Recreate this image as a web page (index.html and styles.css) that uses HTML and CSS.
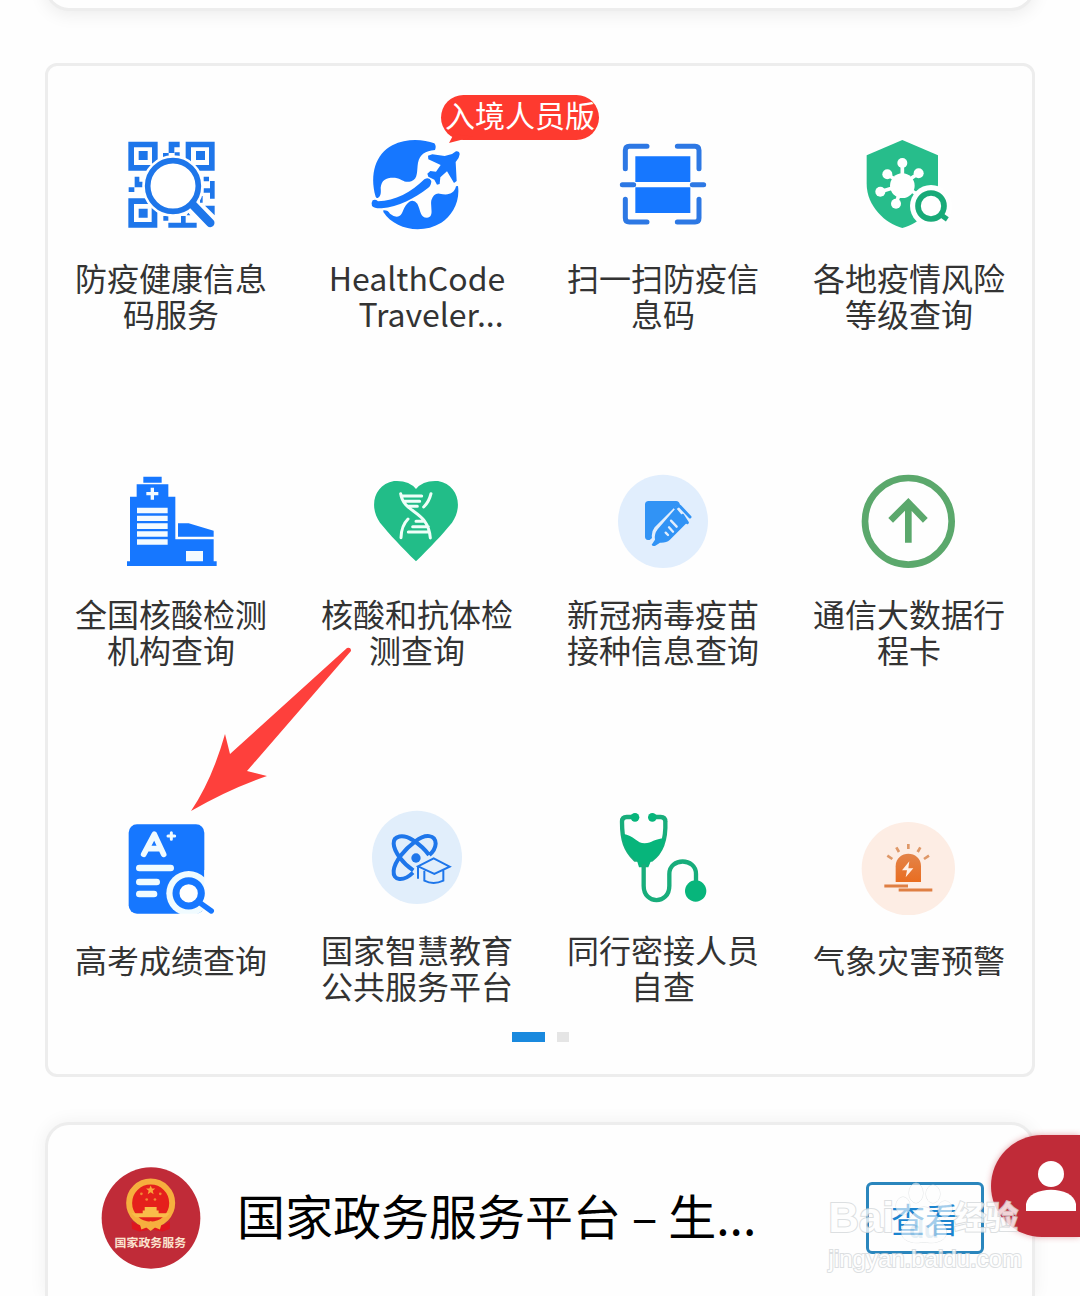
FILE: index.html
```html
<!DOCTYPE html>
<html lang="zh-CN">
<head>
    <meta charset="UTF-8">
    <meta name="viewport" content="width=device-width, initial-scale=1.0">
    <title>国家政务服务平台</title>
    <link rel="stylesheet" href="styles.css">
</head>
<body>
    <div class="page">
        <div class="card card-top"></div>

        <div class="card services">
            <a class="service" href="#">
                <span class="icon">
                    <svg viewBox="69 168 288 288" fill="#1e76ea">
                        <path fill-rule="evenodd" d="M85 182h88v87H85zM102 199v53h54v-53z"/>
                        <path fill-rule="evenodd" d="M257 182h87v87h-87zM273 199v53h54v-53z"/>
                        <path fill-rule="evenodd" d="M85 352h87v88H85zM102 369v54h53v-54z"/>
                        <path d="M116 210h27v27h-27zM288 210h27v27h-27zM116 383h27v27h-27z"/>
                        <path d="M206 182h33v17h-16v17h-17zM189 216h17v12h-17zM224 214h15v14h-15zM104 287h14v15h10v17h-24zM86 319h17v14H86zM311 287h16v14h-16zM330 300h14v53h-14v-18h-19v-13h19zM300 345h8v20h-8zM315 374h29v29zM190 405h15v14h-15zM243 405h14v20h33v15h-85v-15h38zM260 403l5-8 6 8z"/>
                        <circle cx="219" cy="315" r="76" fill="#fff" stroke="#fff" stroke-width="32"/>
                        <path d="M279 372l54 56" stroke="#fff" stroke-width="38"/>
                        <circle cx="219" cy="315" r="76" fill="#fff" stroke="#1e76ea" stroke-width="17"/>
                        <path d="M279 372l52 54" stroke="#1e76ea" stroke-width="25" stroke-linecap="round"/>
                    </svg>
                </span>
                <span class="label">防疫健康信息码服务</span>
            </a>
            <a class="service" href="#">
                <span class="icon">
                    <svg viewBox="87 168 288 288" fill="#1677ff">
                        <path d="M107 347C88 280 107 219 157 193C200 171 250 175 283 187Q290 195 285 207C255 210 240 220 234 245C230 270 235 292 214 301C190 307 188 293 165 290C138 289 125 296 122 320C123 332 124 345 113 351Q109 352 107 347Z"/>
                        <path d="M98 358Q106 354 114 361C165 360 215 333 253 295Q268 287 274 300Q274 314 264 321C225 352 175 377 125 382Q103 383 96 375Q93 365 98 358Z"/>
                        <path d="M264 224L277 220 314 225 336 219 348 211Q359 210 359 220Q358 232 347 243L350 300 342 306 321 271 301 289 299 309 291 311 283 296 265 287 262 278 271 270 288 272 302 252 265 235Z"/>
                        <path d="M130 388Q144 387 150 398Q166 411 178 405C191 397 188 377 208 362Q222 355 232 368C243 390 240 410 261 410C284 408 270 378 274 358Q281 335 299 338C326 344 343 338 348 316L354 315C361 363 335 405 304 425C247 460 165 447 130 393Z"/>
                    </svg>
                    <span class="badge">入境人员版</span>
                </span>
                <span class="label">HealthCode <span class="clipped">Traveler...</span></span>
            </a>
            <a class="service" href="#">
                <span class="icon">
                    <svg viewBox="45 48 288 288" fill="none" stroke="#2d78e4" stroke-width="15" stroke-linecap="round">
                        <path d="M76 143V88q0-12 12-12h53M232 76h53q12 0 12 12v55M76 235v56q0 12 12 12h53M232 303h53q12 0 12-12v-56M67 191h34M277 191h34"/>
                        <path d="M106 106h165v77H106zM106 199h165v77H106z" fill="#1677ff" stroke="none"/>
                    </svg>
                </span>
                <span class="label">扫一扫防疫信息码</span>
            </a>
            <a class="service" href="#">
                <span class="icon">
                    <svg viewBox="783 48 288 288">
                        <path d="M907 57l107 46v85c0 65-55 120-107 133c-50-13-107-65-107-133v-85z" fill="#27bd8b"/>
                        <g stroke="#fff" stroke-width="11" fill="#fff">
                            <path d="M907 126v62M862 160l45 30M956 157l-49 33M841 212l66-20M888 248l19-55M907 192l48 30"/>
                            <g stroke="none">
                                <circle cx="907" cy="194" r="37"/>
                                <circle cx="907" cy="126" r="15"/>
                                <circle cx="862" cy="160" r="15"/>
                                <circle cx="956" cy="157" r="15"/>
                                <circle cx="841" cy="212" r="15"/>
                                <circle cx="888" cy="248" r="15"/>
                                <circle cx="993" cy="255" r="63"/>
                            </g>
                        </g>
                        <circle cx="993" cy="255" r="39" fill="none" stroke="#19aa78" stroke-width="17"/>
                        <path d="M1022 281l20 14" stroke="#19aa78" stroke-width="15"/>
                    </svg>
                </span>
                <span class="label">各地疫情风险等级查询</span>
            </a>

            <a class="service" href="#">
                <span class="icon">
                    <svg viewBox="69 36 288 288" fill="#1677ff">
                        <path d="M130 47h55v18h-55zM110 70h95v37h21v128h115v66h9v14H81v-14h9V107h20zM234 187h32l75 22v18H234z"/>
                        <path d="M152 80h10v13h13v10h-13v13h-10v-13h-13V93h13zM111 140h92v17h-92zM111 164h92v16h-92zM111 187h92v17h-92zM111 211h92v16h-92zM111 235h92v16h-92zM258 270h51v31h-51z" fill="#f4fbff"/>
                    </svg>
                </span>
                <span class="label">全国核酸检测机构查询</span>
            </a>
            <a class="service" href="#">
                <span class="icon">
                    <svg viewBox="807 36 288 288">
                        <path d="M948 301C905 258 870 222 840 185C805 135 823 70 882 60Q927 57 948 84Q969 57 1014 60C1073 70 1091 135 1056 185C1026 222 991 258 948 301Z" fill="#22bd88"/>
                        <g fill="none" stroke="#effff9" stroke-width="9" stroke-linecap="round">
                            <path d="M902 98C912 160 984 145 991 231M993 98q-6 25-22 40M903 230q1-36 21-56M908 105h57M914 121h45M922 136h30M948 181h26M938 197h47M925 213h62"/>
                        </g>
                    </svg>
                </span>
                <span class="label">核酸和抗体检测查询</span>
            </a>
            <a class="service" href="#">
                <span class="icon">
                    <svg viewBox="45 36 288 288">
                        <ellipse cx="189" cy="181" rx="135" ry="140" fill="#e1eefd"/>
                        <path d="M146 120h82q10 0 12 12l-13 4-63 63q-11 14-8 32l-7 6h-5q-9-1-9-10V131q0-11 11-11z" fill="#3193f5"/>
                        <path d="M228 141l35 42-54 54q-10 9-29 8l-14 9q-8 3-11-3l10-15q-3-17 8-31z" fill="#3193f5"/>
                        <path d="M239 135l31 33M226 141l8-5M248 163l14 22" stroke="#3193f5" stroke-width="9" stroke-linecap="round"/>
                        <path d="M197 215l7 7M207 199l12 13M213 179l17 18" stroke="#e1eefd" stroke-width="7" stroke-linecap="round"/>
                    </svg>
                </span>
                <span class="label">新冠病毒疫苗接种信息查询</span>
            </a>
            <a class="service" href="#">
                <span class="icon">
                    <svg viewBox="783 36 288 288" fill="none" stroke="#5ba86c" stroke-width="20">
                        <circle cx="925" cy="181" r="130"/>
                        <path d="M925 245V128M872 178l53-53 51 53"/>
                    </svg>
                </span>
                <span class="label">通信大数据行程卡</span>
            </a>

            <a class="service" href="#">
                <span class="icon">
                    <svg viewBox="69 537 288 288">
                        <rect x="86" y="553" width="227" height="268" rx="25" fill="#1677ff"/>
                        <g fill="none" stroke="#f0fbff" stroke-linecap="round" stroke-linejoin="round">
                            <path d="M131 643l32-60 28 60M145 626h36" stroke-width="17"/>
                            <path d="M214 578v20M204 588h20" stroke-width="9"/>
                            <path d="M118 684h94M118 726h52M118 762h44" stroke-width="20"/>
                        </g>
                        <circle cx="266" cy="760" r="67" fill="#f0fbff"/>
                        <path d="M313 690h40v131h-40zM235 821h80v15h-80z" fill="#fefefe"/>
                        <circle cx="266" cy="760" r="38" fill="#fff" stroke="#1677ff" stroke-width="21"/>
                        <path d="M298 787l36 26" stroke="#1677ff" stroke-width="16" stroke-linecap="round"/>
                    </svg>
                </span>
                <span class="label">高考成绩查询</span>
            </a>
            <a class="service" href="#">
                <span class="icon">
                    <svg viewBox="87 54 288 288" fill="none" stroke="#1e76ea">
                        <ellipse cx="231" cy="199" rx="135" ry="140" fill="#e1eefb" stroke="none"/>
                        <path d="M219 245C190 273 158 270 161 239C164 210 195 174 226 151C257 127 286 131 287 158Q286 177 268 192M220 238C190 219 162 183 161 158C160 134 189 128 218 147Q249 167 267 192" stroke-width="12"/>
                        <circle cx="228" cy="201" r="14" fill="#1e76ea" stroke="none"/>
                        <path d="M234 226l47-24 48 25-46 22zM253 239v30q27 14 57 0v-31M234 226v37" fill="#e1eefb" stroke-width="6"/>
                    </svg>
                </span>
                <span class="label">国家智慧教育公共服务平台</span>
            </a>
            <a class="service" href="#">
                <span class="icon">
                    <svg viewBox="75 54 288 288" fill="#07b57b" stroke="#18ad7b" stroke-width="13">
                        <path d="M130 78h-20q-14 0-14 14c0 55 10 85 40 114h48c31-22 44-64 42-114q0-14-14-14h-22" fill="none"/>
                        <path d="M99 128c33 5 42 29 65 29s27-14 61-15c-4 32-19 55-42 67l-8 20h-28l-6-20c-27-16-41-42-42-81z" stroke="none"/>
                        <path d="M161 220v64c0 58 77 58 77 0v-35c0-50 80-50 80 0v25" fill="none"/>
                        <g stroke="none">
                            <circle cx="135" cy="79" r="13"/>
                            <circle cx="187" cy="79" r="13"/>
                            <circle cx="317" cy="300" r="32"/>
                        </g>
                    </svg>
                </span>
                <span class="label">同行密接人员自查</span>
            </a>
            <a class="service" href="#">
                <span class="icon">
                    <svg viewBox="813 87 288 288">
                        <defs>
                            <linearGradient id="lamp" x1="0" y1="0" x2="0" y2="1">
                                <stop offset="0" stop-color="#e3844a"/>
                                <stop offset="1" stop-color="#e96d20"/>
                            </linearGradient>
                        </defs>
                        <ellipse cx="955" cy="236" rx="140" ry="140" fill="#fdede4"/>
                        <path d="M917 276v-47c0-50 76-50 76 0v47z" fill="url(#lamp)"/>
                        <path d="M958 214l-22 27h15l-4 21 23-27h-15z" fill="#fff0e7"/>
                        <path d="M955 162v15M919 172l8 14M991 172l-8 14M892 197l15 10M1017 197l-15 10" stroke="#df9868" stroke-width="8"/>
                        <path d="M883 288h71M926 300h101" stroke="#df7f43" stroke-width="9"/>
                    </svg>
                </span>
                <span class="label">气象灾害预警</span>
            </a>

            <div class="pager">
                <span class="dot active"></span>
                <span class="dot"></span>
            </div>

            <svg class="pointer" viewBox="0 0 160 164">
                <path d="M0 164Q21 133 34 87L39 107 156 1Q160 0 160 4L56 124 76 129Q38 142 0 164Z" fill="#fe403c"/>
            </svg>
        </div>

        <div class="card app">
            <svg class="app-logo" viewBox="213 201 300 308">
                <ellipse cx="363" cy="355" rx="149" ry="153" fill="#c02b38"/>
                <path d="M304 365l17 10 42 7 42-7 15-10v23l-22 8-35-6-35 6-22-8z" fill="#df151e"/>
                <circle cx="362" cy="310" r="65" fill="#e5201c" stroke="#f6af3e" stroke-width="18"/>
                <path d="M362 257l4 9h10l-8 7 3 10-9-6-9 6 3-10-8-7h10z" fill="#f9a63b"/>
                <g fill="#ef8a35">
                    <circle cx="334" cy="282" r="4"/>
                    <circle cx="391" cy="282" r="4"/>
                    <circle cx="350" cy="299" r="4"/>
                    <circle cx="375" cy="299" r="4"/>
                </g>
                <path d="M344 322h36v10h6v9h34l-12 12h-92l-12-12h34v-9h6z" fill="#f9bd4a"/>
                <path d="M325 358l22 15 15-9 15 9 22-15-9 32-15-6-13 10-13-10-15 6z" fill="#f6af3e"/>
                <text x="361" y="444" text-anchor="middle" class="logo-text">国家政务服务</text>
            </svg>
            <div class="app-name">国家政务服务平台 – 生...</div>
            <button class="view-btn">查看</button>
        </div>

        <button class="profile-tab" aria-label="我的">
            <svg viewBox="0 0 50 50" fill="#fff">
                <circle cx="25" cy="13" r="13"/>
                <path d="M0 50v-7c3-19 47-19 50 0v7z"/>
            </svg>
        </button>

        <div class="watermark">
            <div class="watermark-brand">
                <span>Bai</span>
                <svg viewBox="0 0 60 62" fill="#fff" stroke="#d0d5d8">
                    <ellipse cx="9" cy="24" rx="7" ry="9"/>
                    <ellipse cx="22" cy="11" rx="7" ry="10"/>
                    <ellipse cx="39" cy="12" rx="7" ry="9"/>
                    <ellipse cx="51" cy="27" rx="7" ry="8"/>
                    <path d="M30 25c9 0 12 10 20 18c8 13-5 20-20 17c-15 3-28-4-20-17c8-7 11-18 20-18z"/>
                    <text x="30" y="56" text-anchor="middle" class="paw-text">du</text>
                </svg>
                <span>经验</span>
            </div>
            <div class="watermark-url">jingyan.baidu.com</div>
        </div>
    </div>
</body>
</html>
```

FILE: styles.css
```css
* {
    box-sizing: border-box;
}

body {
    font-family: "Noto Sans CJK SC", sans-serif;
    background: #fefefe;
    margin: 0;
}

.page {
    position: relative;
    display: flex;
    flex-direction: column;
    height: 100vh;
    min-height: 1296px;
    padding: 0 45px;
    overflow: hidden;
}

.card {
    background: #fefefe;
    border: 3px solid #ededed;
}

/* only the bottom edge of this card is scrolled into view */
.card-top {
    height: 60px;
    flex-shrink: 0;
    margin-top: -49px;
    margin-bottom: 52px;
    border-radius: 24px;
    box-shadow: 0 3px 18px rgba(0,0,0,0.08);
}

.services {
    position: relative;
    display: grid;
    grid-template-columns: repeat(4, 1fr);
    grid-auto-rows: 336px;
    margin-bottom: 45px;
    border-radius: 12px;
}

.service {
    display: flex;
    flex-direction: column;
    align-items: center;
    justify-content: center;
    gap: 26px;
    color: #333;
    text-decoration: none;
}

.icon {
    position: relative;
    width: 96px;
    height: 96px;
}

.icon svg {
    display: block;
    width: 100%;
    height: 100%;
}

.label {
    width: 200px;
    min-height: 52px;
    font-size: 32px;
    line-height: 36px;
    text-align: center;
}

.clipped {
    padding-left: 28px;
}

.badge {
    position: absolute;
    left: 72px;
    top: -42px;
    height: 45px;
    padding: 0 4px;
    border-radius: 23px;
    background: #fe3a2f;
    color: #fff;
    font-size: 30px;
    line-height: 38px;
    white-space: nowrap;
}

.badge::after {
    content: "";
    position: absolute;
    left: 8px;
    bottom: -3px;
    width: 24px;
    height: 9px;
    background: #fe3a2f;
    clip-path: polygon(0 100%, 20% 0, 100% 30%);
}

.pager {
    position: absolute;
    left: 0;
    right: 0;
    bottom: 32px;
    display: flex;
    justify-content: center;
    gap: 12px;
}

.dot {
    width: 12px;
    height: 10px;
    background: #e5e5e5;
}

.dot.active {
    width: 33px;
    background: #1989de;
}

.pointer {
    position: absolute;
    left: 143px;
    top: 581px;
    width: 160px;
    height: 164px;
}

.app {
    flex: 1;
    display: flex;
    align-items: flex-start;
    padding: 42px 48px 0 53px;
    border-bottom: none;
    border-radius: 24px 24px 0 0;
    box-shadow: 0 0 18px rgba(0,0,0,0.06);
}

.app-logo {
    width: 100px;
    height: 102px;
    flex-shrink: 0;
}

.logo-text {
    font-size: 36px;
    font-weight: bold;
    fill: #fbe3cf;
}

.app-name {
    flex: 1;
    min-width: 0;
    margin: 0 80px 0 36px;
    color: #000;
    font-size: 48px;
    line-height: 94px;
    white-space: nowrap;
    overflow: hidden;
    text-overflow: ellipsis;
}

.view-btn {
    width: 118px;
    height: 72px;
    margin-top: 15px;
    padding: 0;
    border: 3px solid #2a86bd;
    border-radius: 6px;
    background: none;
    color: #1b84cf;
    font-family: inherit;
    font-size: 34px;
    cursor: pointer;
}

.profile-tab {
    position: absolute;
    right: 0;
    top: 1135px;
    width: 89px;
    height: 102px;
    padding: 0 0 0 35px;
    border: none;
    border-radius: 51px 0 0 51px;
    background: #c02b38;
    box-shadow: 0 0 6px rgba(192,43,56,0.4);
    cursor: pointer;
}

.profile-tab svg {
    display: block;
    width: 50px;
    height: 50px;
}

.watermark {
    position: absolute;
    right: 58px;
    top: 1180px;
    color: #fff;
    font-family: "Liberation Sans", "Noto Sans CJK SC", sans-serif;
    -webkit-text-stroke: 2px #d4d8da;
    paint-order: stroke fill;
    opacity: 0.8;
    pointer-events: none;
}

.watermark-brand {
    display: flex;
    align-items: flex-end;
    height: 64px;
    font-size: 42px;
    font-weight: bold;
    line-height: 52px;
}

.watermark-brand span:last-child {
    font-size: 32px;
}

.watermark-brand svg {
    width: 60px;
    height: 62px;
    opacity: 0.75;
}

.paw-text {
    font-size: 24px;
    fill: #d5e6f0;
    stroke: none;
    -webkit-text-stroke: 0;
}

.watermark-url {
    font-size: 24px;
    line-height: 30px;
}
```
